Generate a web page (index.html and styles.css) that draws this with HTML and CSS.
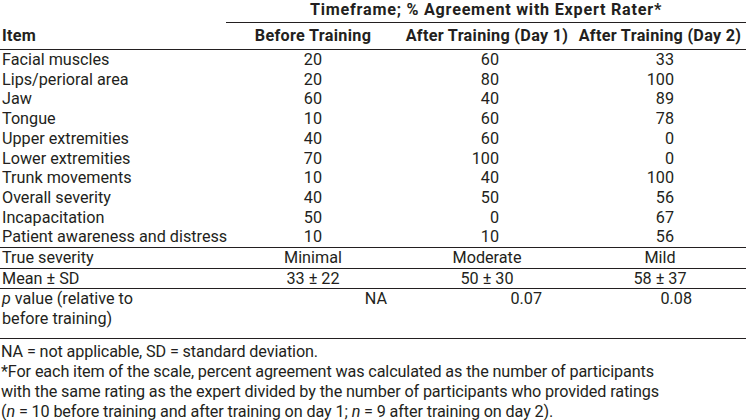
FILE: index.html
```html
<!DOCTYPE html>
<html lang="en">
<head>
<meta charset="utf-8">
<title>Agreement with Expert Rater</title>
<link rel="stylesheet" href="styles.css">
</head>
<body>
<div class="page">
  <table class="data">
    <colgroup>
      <col class="c-item">
      <col class="c-before">
      <col class="c-day1">
      <col class="c-day2">
    </colgroup>
    <thead>
      <tr class="spanner-row">
        <th class="blank"></th>
        <th colspan="3" class="spanner">Timeframe; % Agreement with Expert Rater*</th>
      </tr>
      <tr class="head-row">
        <th class="item-h">Item</th>
        <th>Before Training</th>
        <th>After Training (Day 1)</th>
        <th>After Training (Day 2)</th>
      </tr>
    </thead>
    <tbody class="items">
      <tr><td class="lbl">Facial muscles</td><td class="n1">20</td><td class="n2">60</td><td class="n3">33</td></tr>
      <tr><td class="lbl">Lips/perioral area</td><td class="n1">20</td><td class="n2">80</td><td class="n3">100</td></tr>
      <tr><td class="lbl">Jaw</td><td class="n1">60</td><td class="n2">40</td><td class="n3">89</td></tr>
      <tr><td class="lbl">Tongue</td><td class="n1">10</td><td class="n2">60</td><td class="n3">78</td></tr>
      <tr><td class="lbl">Upper extremities</td><td class="n1">40</td><td class="n2">60</td><td class="n3">0</td></tr>
      <tr><td class="lbl">Lower extremities</td><td class="n1">70</td><td class="n2">100</td><td class="n3">0</td></tr>
      <tr><td class="lbl">Trunk movements</td><td class="n1">10</td><td class="n2">40</td><td class="n3">100</td></tr>
      <tr><td class="lbl">Overall severity</td><td class="n1">40</td><td class="n2">50</td><td class="n3">56</td></tr>
      <tr><td class="lbl">Incapacitation</td><td class="n1">50</td><td class="n2">0</td><td class="n3">67</td></tr>
      <tr><td class="lbl">Patient awareness and distress</td><td class="n1">10</td><td class="n2">10</td><td class="n3">56</td></tr>
    </tbody>
    <tbody class="summary">
      <tr class="sum-row"><td class="lbl">True severity</td><td class="ctr">Minimal</td><td class="ctr">Moderate</td><td class="ctr">Mild</td></tr>
      <tr class="sum-row"><td class="lbl">Mean ± SD</td><td class="ctr">33 ± 22</td><td class="ctr">50 ± 30</td><td class="ctr">58 ± 37</td></tr>
      <tr class="p-row"><td class="lbl"><i>p</i> value (relative to<br>before training)</td><td class="p1">NA</td><td class="p2">0.07</td><td class="p3">0.08</td></tr>
    </tbody>
  </table>
  <div class="notes">
    <p>NA = not applicable, SD = standard deviation.</p>
    <p>*For each item of the scale, percent agreement was calculated as the number of participants<br>with the same rating as the expert divided by the number of participants who provided ratings<br>(<i>n</i> = 10 before training and after training on day 1; <i>n</i> = 9 after training on day 2).</p>
  </div>
</div>
</body>
</html>
```
FILE: styles.css
```css
html, body {
  margin: 0;
  padding: 0;
  background: #ffffff;
}

body {
  font-family: Roboto, "Liberation Sans", sans-serif;
  font-weight: 400;
  font-size: 16.2px;
  color: #231f20;
}

.page {
  width: 748px;
}

.data {
  width: 746px;
  border-collapse: collapse;
  table-layout: fixed;
}

.c-item { width: 226px; }
.c-before { width: 174px; }
.c-day1 { width: 174px; }
.c-day2 { width: 172px; }

.data th,
.data td {
  padding: 0;
  line-height: 19.7px;
  white-space: nowrap;
}

.data th {
  font-weight: 700;
  text-align: center;
  letter-spacing: 0.3px;
}

.data .spanner-row th {
  height: 21px;
  vertical-align: top;
  padding-top: 1px;
  line-height: 18px;
}

.data .spanner {
  letter-spacing: 0.75px;
  border-bottom: 1px solid #231f20;
}

.data .head-row th {
  height: 22px;
  vertical-align: top;
  padding-top: 4px;
  line-height: 18px;
  border-bottom: 1px solid #231f20;
}

.data .head-row .item-h {
  text-align: left;
  padding-left: 2px;
}

.data .lbl {
  text-align: left;
  padding-left: 2px;
}

.data .items tr:last-child td {
  border-bottom: 1px solid #231f20;
}

.data .n1,
.data .n2,
.data .n3 {
  text-align: right;
}

.data .n1 { padding-right: 78px; }
.data .n2 { padding-right: 75px; }
.data .n3 { padding-right: 72px; }

.data .sum-row td {
  border-bottom: 1px solid #231f20;
}

.data .ctr {
  text-align: center;
}

.data .p-row td {
  vertical-align: top;
  padding-bottom: 9px;
  border-bottom: 1px solid #231f20;
}

.data .p1,
.data .p2,
.data .p3 {
  text-align: right;
}

.data .p1 { padding-right: 13px; }
.data .p2 { padding-right: 32px; }
.data .p3 { padding-right: 54px; }

.notes {
  padding-top: 3px;
  line-height: 20px;
}

.notes p {
  margin: 0;
  padding-left: 1px;
  white-space: nowrap;
  letter-spacing: -0.12px;
}
```
